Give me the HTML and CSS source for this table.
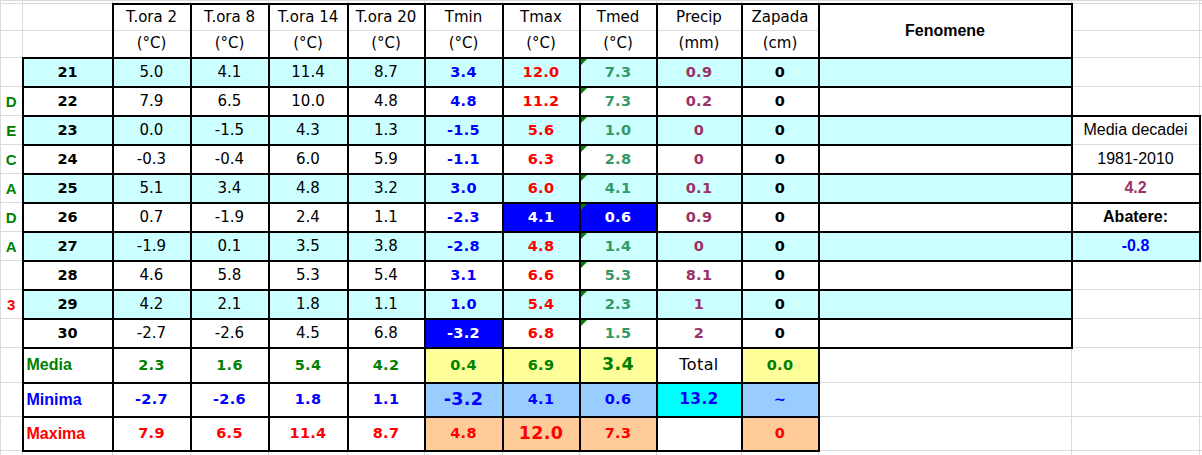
FILE: index.html
```html
<!DOCTYPE html>
<html>
<head>
<meta charset="utf-8">
<link rel="stylesheet" href="styles.css">
</head>
<body>
<table class="sheet">
<colgroup>
<col class="c-a"><col class="c-b"><col class="c-t"><col class="c-t"><col class="c-t14"><col class="c-t20">
<col class="c-t"><col class="c-x"><col class="c-x"><col class="c-p"><col class="c-x"><col class="c-f"><col class="c-r"><col class="c-e">
</colgroup>
<tr class="sliver"><td></td><td></td><td></td><td></td><td></td><td></td><td></td><td></td><td></td><td></td><td></td><td></td><td></td><td></td></tr>
<tr class="h1">
<td></td><td></td>
<td class="k hd">T.ora 2</td><td class="k hd">T.ora 8</td><td class="k hd">T.ora 14</td><td class="k hd">T.ora 20</td>
<td class="k hd">Tmin</td><td class="k hd">Tmax</td><td class="k hd">Tmed</td><td class="k hd">Precip</td><td class="k hd">Zapada</td>
<td class="kf fen" rowspan="2">Fenomene</td><td></td><td></td>
</tr>
<tr class="h2">
<td></td><td></td>
<td class="k hd">(°C)</td><td class="k hd">(°C)</td><td class="k hd">(°C)</td><td class="k hd">(°C)</td>
<td class="k hd">(°C)</td><td class="k hd">(°C)</td><td class="k hd">(°C)</td><td class="k hd">(mm)</td><td class="k hd">(cm)</td>
<td></td><td></td>
</tr>

<tr class="row alt">
<td class="let"></td><td class="kf day">21</td>
<td class="kf v">5.0</td><td class="kf v">4.1</td><td class="kf v">11.4</td><td class="kf v">8.7</td>
<td class="kf m tmin">3.4</td><td class="kf m tmax">12.0</td><td class="kf m tmed">7.3</td><td class="kf m prc">0.9</td><td class="kf m zap">0</td>
<td class="kf"></td><td></td><td></td>
</tr>
<tr class="row">
<td class="let">D</td><td class="kf day">22</td>
<td class="kf v">7.9</td><td class="kf v">6.5</td><td class="kf v">10.0</td><td class="kf v">4.8</td>
<td class="kf m tmin">4.8</td><td class="kf m tmax">11.2</td><td class="kf m tmed">7.3</td><td class="kf m prc">0.2</td><td class="kf m zap">0</td>
<td class="kf"></td><td></td><td></td>
</tr>
<tr class="row alt">
<td class="let">E</td><td class="kf day">23</td>
<td class="kf v">0.0</td><td class="kf v">-1.5</td><td class="kf v">4.3</td><td class="kf v">1.3</td>
<td class="kf m tmin">-1.5</td><td class="kf m tmax">5.6</td><td class="kf m tmed">1.0</td><td class="kf m prc">0</td><td class="kf m zap">0</td>
<td class="kf"></td><td class="kf side white sb">Media decadei</td><td></td>
</tr>
<tr class="row">
<td class="let">C</td><td class="kf day">24</td>
<td class="kf v">-0.3</td><td class="kf v">-0.4</td><td class="kf v">6.0</td><td class="kf v">5.9</td>
<td class="kf m tmin">-1.1</td><td class="kf m tmax">6.3</td><td class="kf m tmed">2.8</td><td class="kf m prc">0</td><td class="kf m zap">0</td>
<td class="kf"></td><td class="kf side st">1981-2010</td><td></td>
</tr>
<tr class="row alt">
<td class="let">A</td><td class="kf day">25</td>
<td class="kf v">5.1</td><td class="kf v">3.4</td><td class="kf v">4.8</td><td class="kf v">3.2</td>
<td class="kf m tmin">3.0</td><td class="kf m tmax">6.0</td><td class="kf m tmed">4.1</td><td class="kf m prc">0.1</td><td class="kf m zap">0</td>
<td class="kf"></td><td class="kf side white sv-p">4.2</td><td></td>
</tr>
<tr class="row">
<td class="let">D</td><td class="kf day">26</td>
<td class="kf v">0.7</td><td class="kf v">-1.9</td><td class="kf v">2.4</td><td class="kf v">1.1</td>
<td class="kf m tmin">-2.3</td><td class="kf m hi">4.1</td><td class="kf m tmed hi">0.6</td><td class="kf m prc">0.9</td><td class="kf m zap">0</td>
<td class="kf"></td><td class="kf side sv-b">Abatere:</td><td></td>
</tr>
<tr class="row alt">
<td class="let">A</td><td class="kf day">27</td>
<td class="kf v">-1.9</td><td class="kf v">0.1</td><td class="kf v">3.5</td><td class="kf v">3.8</td>
<td class="kf m tmin">-2.8</td><td class="kf m tmax">4.8</td><td class="kf m tmed">1.4</td><td class="kf m prc">0</td><td class="kf m zap">0</td>
<td class="kf"></td><td class="kf side sv-blue">-0.8</td><td></td>
</tr>
<tr class="row">
<td class="let"></td><td class="kf day">28</td>
<td class="kf v">4.6</td><td class="kf v">5.8</td><td class="kf v">5.3</td><td class="kf v">5.4</td>
<td class="kf m tmin">3.1</td><td class="kf m tmax">6.6</td><td class="kf m tmed">5.3</td><td class="kf m prc">8.1</td><td class="kf m zap">0</td>
<td class="kf"></td><td></td><td></td>
</tr>
<tr class="row alt">
<td class="let red">3</td><td class="kf day">29</td>
<td class="kf v">4.2</td><td class="kf v">2.1</td><td class="kf v">1.8</td><td class="kf v">1.1</td>
<td class="kf m tmin">1.0</td><td class="kf m tmax">5.4</td><td class="kf m tmed">2.3</td><td class="kf m prc">1</td><td class="kf m zap">0</td>
<td class="kf"></td><td></td><td></td>
</tr>
<tr class="row">
<td class="let"></td><td class="kf day">30</td>
<td class="kf v">-2.7</td><td class="kf v">-2.6</td><td class="kf v">4.5</td><td class="kf v">6.8</td>
<td class="kf m hi">-3.2</td><td class="kf m tmax">6.8</td><td class="kf m tmed">1.5</td><td class="kf m prc">2</td><td class="kf m zap">0</td>
<td class="kf"></td><td></td><td></td>
</tr>

<tr class="s1">
<td></td><td class="kf lab g">Media</td>
<td class="kf m g">2.3</td><td class="kf m g">1.6</td><td class="kf m g">5.4</td><td class="kf m g">4.2</td>
<td class="kf m g yel">0.4</td><td class="kf m g yel">6.9</td><td class="kf m g yel big">3.4</td><td class="kf v tot">Total</td><td class="kf m g yel">0.0</td>
<td></td><td></td><td></td>
</tr>
<tr class="s2">
<td></td><td class="kf lab b">Minima</td>
<td class="kf m b">-2.7</td><td class="kf m b">-2.6</td><td class="kf m b">1.8</td><td class="kf m b">1.1</td>
<td class="kf m b lb big">-3.2</td><td class="kf m b lb">4.1</td><td class="kf m b lb">0.6</td><td class="kf m b cy mid">13.2</td><td class="kf m b lb">~</td>
<td></td><td></td><td></td>
</tr>
<tr class="s3">
<td></td><td class="kf lab r">Maxima</td>
<td class="kf m r">7.9</td><td class="kf m r">6.5</td><td class="kf m r">11.4</td><td class="kf m r">8.7</td>
<td class="kf m r pe">4.8</td><td class="kf m r pe big">12.0</td><td class="kf m r pe">7.3</td><td class="kf"></td><td class="kf m r pe">0</td>
<td></td><td></td><td></td>
</tr>
<tr class="sliver2"><td></td><td></td><td></td><td></td><td></td><td></td><td></td><td></td><td></td><td></td><td></td><td></td><td></td><td></td></tr>
</table>
</body>
</html>
```

FILE: styles.css
```css
html, body {
  margin: 0;
  padding: 0;
  background: #ffffff;
}
body {
  width: 1202px;
  height: 455px;
  overflow: hidden;
}
.sheet {
  border-collapse: collapse;
  table-layout: fixed;
  width: 1203px;
  font-family: "Comic Sans MS", "DejaVu Sans", sans-serif;
  font-size: 15px;
  color: #000;
}
.c-a { width: 22px; }
.c-b { width: 90px; }
.c-t { width: 78px; }
.c-t14 { width: 79px; }
.c-t20 { width: 77px; }
.c-x { width: 77px; }
.c-p { width: 85px; }
.c-f { width: 253px; }
.c-r { width: 128px; }
.c-e { width: 4px; }

.sheet td {
  border: 1px solid #dadada;
  padding: 0;
  text-align: center;
  vertical-align: middle;
  white-space: nowrap;
  overflow: hidden;
  line-height: 1;
}
.sliver { height: 3px; }
.sliver2 { height: 5px; }
.h1, .h2 { height: 27px; }
.row { height: 29px; }
.s1 { height: 35px; }
.s2, .s3 { height: 34px; }

.sheet td.k, .sheet td.kf {
  border: 2px solid #000;
}
.h1 td.k { border-bottom: 1px solid #dadada; }
.h2 td.k { border-top: 1px solid #dadada; }
.sheet td.sb { border-bottom: 1px solid #dadada; }
.sheet td.st { border-top: 1px solid #dadada; }

.hd { font-size: 15px; }
.fen {
  font-family: "Liberation Sans", Arial, sans-serif;
  font-weight: bold;
  font-size: 16px;
}
.alt td.kf { background: #ccffff; }
.alt td.white { background: #ffffff; }

.let {
  font-family: "Liberation Sans", Arial, sans-serif;
  font-weight: bold;
  font-size: 15px;
  color: #008000;
}
.let.red { color: #ff0000; }
.day {
  font-weight: bold;
  font-size: 14.5px;
}
.v { font-size: 15px; }
.m {
  font-family: "DejaVu Sans", sans-serif;
  font-weight: bold;
  font-size: 14.5px;
  letter-spacing: 0.3px;
}
.tmin { color: #0000ff; }
.tmax { color: #ff0000; }
.tmed { color: #339966; position: relative; }
.tmed::before {
  content: "";
  position: absolute;
  top: 0;
  left: 0;
  width: 0;
  height: 0;
  border-top: 6px solid #008000;
  border-right: 6px solid transparent;
}
.prc { color: #993366; }
.zap { color: #000; }
.sheet .alt td.hi, .sheet td.hi {
  background: #0000ff;
  color: #ffffff;
}

.side {
  font-family: "Liberation Sans", Arial, sans-serif;
  font-size: 16px;
}
.sv-p { color: #993366; font-weight: bold; }
.sv-b { font-weight: bold; }
.sv-blue { color: #0000ff; font-weight: bold; }

.sheet td.lab {
  font-family: "Liberation Sans", Arial, sans-serif;
  font-weight: bold;
  font-size: 16px;
  text-align: left;
  padding-left: 3px;
  letter-spacing: 0;
}
.g { color: #008000; }
.b { color: #0000ff; }
.r { color: #ff0000; }
.yel { background: #ffff99; }
.lb { background: #99ccff; }
.cy { background: #00ffff; }
.pe { background: #ffcc99; }
.sheet td.big { font-size: 17.5px; letter-spacing: 0.3px; }
.sheet td.mid { font-size: 15.5px; letter-spacing: 0.3px; }
.sheet td.tot { font-size: 16px; font-weight: normal; letter-spacing: 0.4px; }
```
